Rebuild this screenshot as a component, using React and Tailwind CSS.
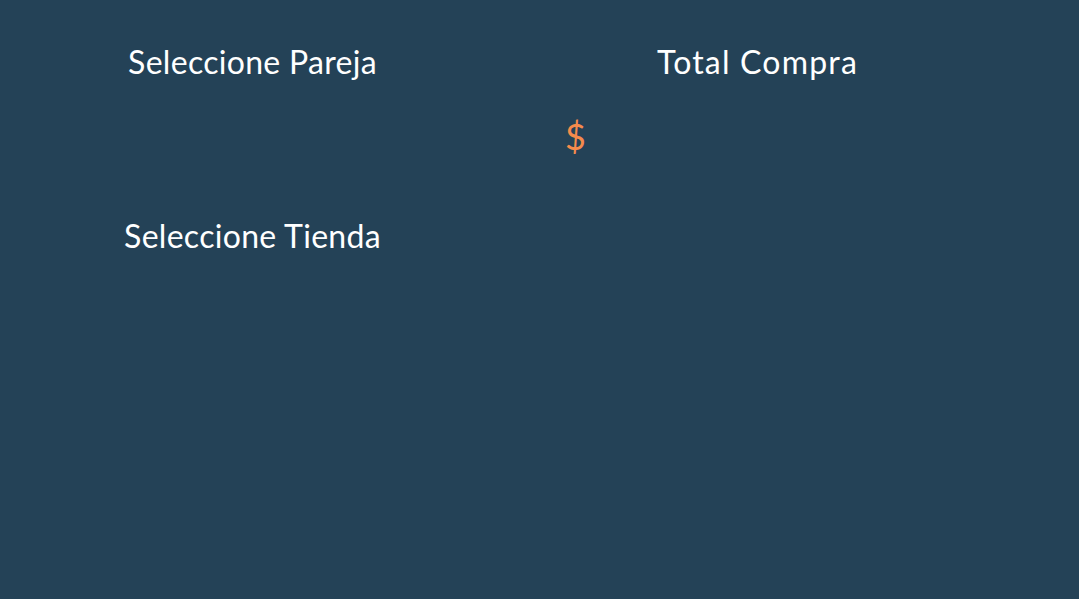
import React from 'react';

const font = { fontFamily: '"Lato", "Liberation Sans", sans-serif' };

export default function App() {
  return (
    <div className="min-h-screen w-full bg-[#244257] text-white" style={font}>
      <div className="grid grid-cols-[505px_505px]">
        <div className="flex flex-col items-center">
          <h2 className="mt-[42px] text-[32px] leading-[40px] tracking-[0.3px] font-normal">Seleccione Pareja</h2>
          <div className="h-[134px]" />
          <h2 className="text-[32px] leading-[40px] tracking-[0.3px] font-normal">Seleccione Tienda</h2>
        </div>
        <div className="flex flex-col">
          <h2 className="mt-[42px] self-center text-[32px] leading-[40px] tracking-[1.2px] font-normal">Total Compra</h2>
          <div className="mt-[34px] pl-[60px] text-[36px] leading-[40px] text-[#f58b4c]">$</div>
        </div>
      </div>
    </div>
  );
}
